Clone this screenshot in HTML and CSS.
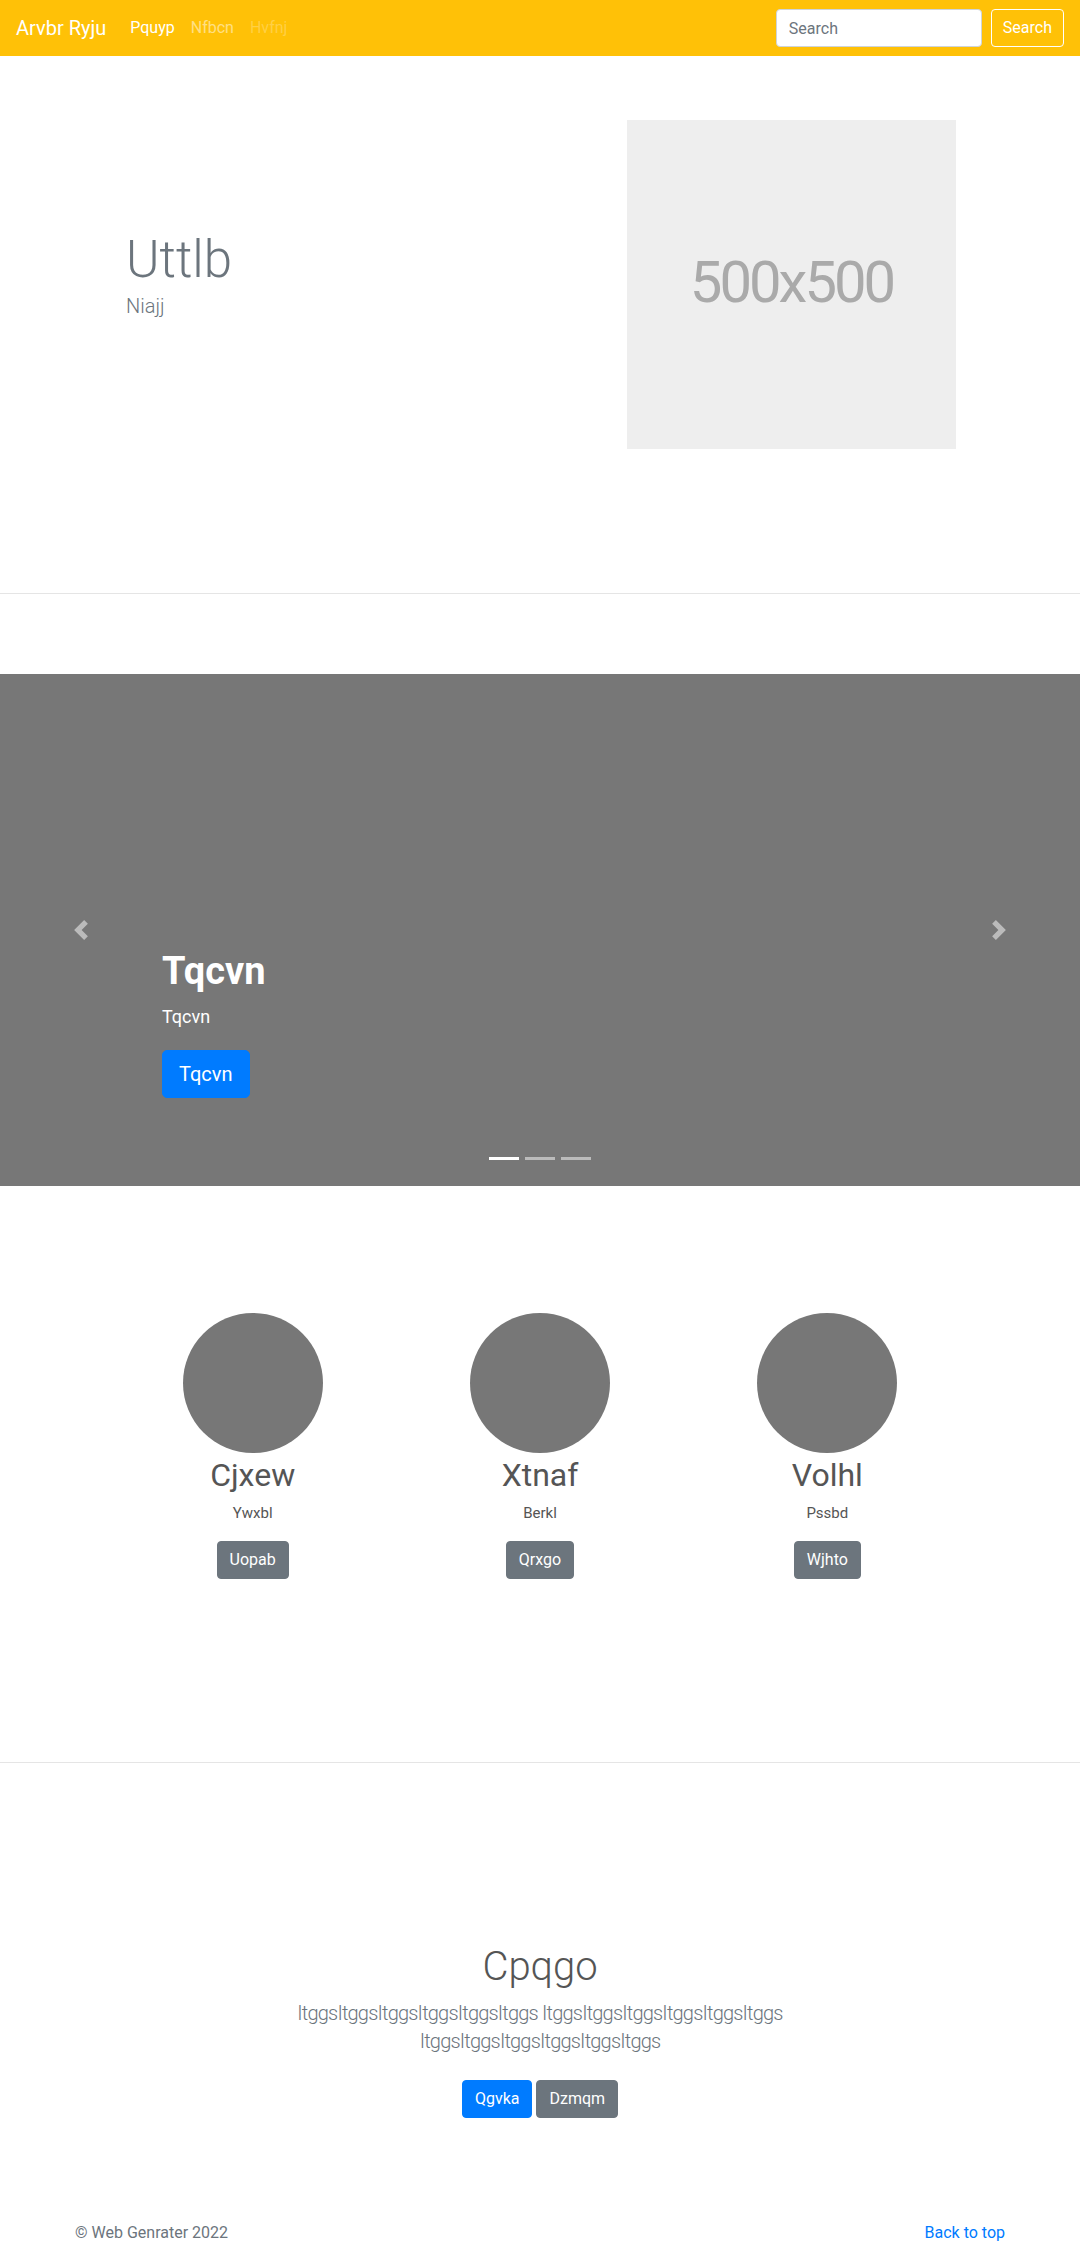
FILE: index.html
```html
<!DOCTYPE html>
<html lang="en">
<head>
<meta charset="utf-8">
<title>Arvbr Ryju</title>
<link rel="stylesheet" href="styles.css">
</head>
<body>
<header class="navbar">
  <a class="brand" href="#">Arvbr Ryju</a>
  <nav class="nav">
    <a class="nav-link active" href="#">Pquyp</a>
    <a class="nav-link" href="#">Nfbcn</a>
    <a class="nav-link disabled" href="#">Hvfnj</a>
  </nav>
  <form class="search">
    <input class="search-input" type="text" placeholder="Search">
    <button class="search-btn" type="button">Search</button>
  </form>
</header>

<section class="hero">
  <div class="hero-text">
    <h1 class="hero-title">Uttlb</h1>
    <p class="hero-lead">Niajj</p>
  </div>
  <div class="hero-img">500x500</div>
</section>

<hr class="divider">

<section class="carousel">
  <div class="caption">
    <h1 class="caption-title">Tqcvn</h1>
    <p class="caption-text">Tqcvn</p>
    <a class="btn btn-primary btn-lg" href="#">Tqcvn</a>
  </div>
  <a class="control control-prev" href="#">
    <svg width="20" height="20" viewBox="0 0 8 8"><path d="M5.25 0l-4 4 4 4 1.5-1.5-2.5-2.5 2.5-2.5-1.5-1.5z"/></svg>
  </a>
  <a class="control control-next" href="#">
    <svg width="20" height="20" viewBox="0 0 8 8"><path d="M2.75 0l-1.5 1.5 2.5 2.5-2.5 2.5 1.5 1.5 4-4-4-4z"/></svg>
  </a>
  <ol class="indicators">
    <li class="active"></li>
    <li></li>
    <li></li>
  </ol>
</section>

<section class="features">
  <div class="feature">
    <div class="circle"></div>
    <h2 class="feature-name">Cjxew</h2>
    <p class="feature-text">Ywxbl</p>
    <a class="btn btn-secondary" href="#">Uopab</a>
  </div>
  <div class="feature">
    <div class="circle"></div>
    <h2 class="feature-name">Xtnaf</h2>
    <p class="feature-text">Berkl</p>
    <a class="btn btn-secondary" href="#">Qrxgo</a>
  </div>
  <div class="feature">
    <div class="circle"></div>
    <h2 class="feature-name">Volhl</h2>
    <p class="feature-text">Pssbd</p>
    <a class="btn btn-secondary" href="#">Wjhto</a>
  </div>
</section>

<hr class="divider">

<section class="album">
  <h1 class="album-title">Cpqgo</h1>
  <p class="album-lead">ItggsItggsItggsItggsItggsItggs ItggsItggsItggsItggsItggsItggs ItggsItggsItggsItggsItggsItggs</p>
  <div class="album-actions">
    <a class="btn btn-primary" href="#">Qgvka</a>
    <a class="btn btn-secondary" href="#">Dzmqm</a>
  </div>
</section>

<footer class="footer">
  <p class="copy">© Web Genrater 2022</p>
  <a class="back" href="#">Back to top</a>
</footer>
</body>
</html>
```

FILE: styles.css
```css
* { box-sizing: border-box; }

body {
  margin: 0;
  font-family: Roboto, "Liberation Sans", sans-serif;
  font-size: 16px;
  line-height: 1.5;
  color: #212529;
  background: #fff;
}

a { text-decoration: none; }

/* Navbar */
.navbar {
  display: flex;
  align-items: center;
  height: 56px;
  padding: 8px 16px;
  background: #ffc107;
}
.brand {
  font-size: 20px;
  line-height: 30px;
  padding: 5px 0;
  margin-right: 16px;
  color: #fff;
}
.nav {
  display: flex;
  flex: 1;
}
.nav-link {
  padding: 8px;
  line-height: 24px;
  color: rgba(255, 255, 255, 0.5);
}
.nav-link.active { color: #fff; }
.nav-link.disabled { color: rgba(255, 255, 255, 0.25); }

.search {
  display: flex;
  align-items: center;
}
.search-input {
  width: 206px;
  height: 38px;
  padding: 6px 12px;
  margin-right: 9px;
  font-family: inherit;
  font-size: 16px;
  color: #495057;
  background: #fff;
  border: 1px solid #ced4da;
  border-radius: 4px;
}
.search-input::placeholder { color: #6c757d; }
.search-btn {
  height: 38px;
  padding: 6px 11px;
  font-family: inherit;
  font-size: 16px;
  line-height: 24px;
  color: #fff;
  background: transparent;
  border: 1px solid #fff;
  border-radius: 4px;
}

/* Hero */
.hero {
  display: flex;
  align-items: flex-start;
  max-width: 960px;
  margin: 0 auto;
  padding: 64px 0 144px;
}
.hero-text {
  flex: 1;
  padding: 109px 0 0 66px;
}
.hero-title {
  margin: 0;
  font-size: 51px;
  font-weight: 300;
  line-height: 1.2;
  color: #6c757d;
}
.hero-lead {
  margin: 1px 0 0;
  font-size: 20px;
  font-weight: 300;
  line-height: 30px;
  color: #6c757d;
}
.hero-img {
  width: 329px;
  height: 329px;
  margin-right: 64px;
  display: flex;
  align-items: center;
  justify-content: center;
  padding-bottom: 5px;
  background: #eee;
  color: #aaa;
  font-size: 58px;
  line-height: 1;
  letter-spacing: -3px;
}

.divider {
  margin: 0;
  border: 0;
  border-top: 1px solid rgba(0, 0, 0, 0.1);
}

/* Carousel */
.carousel {
  position: relative;
  height: 512px;
  margin-top: 80px;
  background: #777;
  display: flex;
  flex-direction: column;
  justify-content: flex-end;
  padding: 0 15% 88px;
}
.caption { color: #fff; }
.caption-title {
  margin: 0 0 8px;
  font-size: 38px;
  font-weight: 700;
  line-height: 1.2;
}
.caption-text {
  margin: 0 0 20px;
  font-size: 18px;
  line-height: 27px;
}
.btn {
  display: inline-block;
  padding: 6px 12px;
  font-size: 16px;
  line-height: 24px;
  color: #fff;
  border: 1px solid transparent;
  border-radius: 4px;
  text-align: center;
}
.btn-lg {
  padding: 8px 16px;
  font-size: 20px;
  line-height: 30px;
  border-radius: 5px;
}
.btn-primary { background: #007bff; border-color: #007bff; }
.btn-secondary { background: #6c757d; border-color: #6c757d; }

.control {
  position: absolute;
  top: 0;
  bottom: 0;
  width: 15%;
  display: flex;
  align-items: center;
  justify-content: center;
}
.control svg { fill: #fff; opacity: 0.5; }
.control-prev { left: 0; }
.control-next { right: 0; }

.indicators {
  position: absolute;
  left: 0;
  right: 0;
  bottom: 26px;
  display: flex;
  justify-content: center;
  margin: 0;
  padding: 0;
  list-style: none;
}
.indicators li {
  width: 30px;
  height: 3px;
  margin: 0 3px;
  background: rgba(255, 255, 255, 0.5);
}
.indicators li.active { background: #fff; }

/* Features */
.features {
  display: grid;
  grid-template-columns: repeat(3, 1fr);
  width: 862px;
  margin: 0 auto;
  padding: 127px 0 183px;
  text-align: center;
}
.feature {
  display: flex;
  flex-direction: column;
  align-items: center;
}
.circle {
  width: 140px;
  height: 140px;
  border-radius: 50%;
  background: #777;
}
.feature-name {
  margin: 3px 0 8px;
  font-size: 32px;
  font-weight: 400;
  line-height: 1.2;
  color: #555;
}
.feature-text {
  margin: 0 0 16px;
  font-size: 15px;
  line-height: 22.5px;
  color: #555;
}

/* Album */
.album {
  max-width: 640px;
  margin: 0 auto;
  padding: 180px 15px 0;
  text-align: center;
}
.album-title {
  margin: 0 0 8px;
  font-size: 40px;
  font-weight: 300;
  line-height: 1.2;
  color: #555;
}
.album-lead {
  margin: 0 0 25px;
  font-size: 20px;
  font-weight: 300;
  line-height: 28px;
  letter-spacing: -0.8px;
  color: #6c757d;
}
.album-actions {
  display: flex;
  justify-content: center;
  gap: 4px;
}

/* Footer */
.footer {
  display: flex;
  justify-content: space-between;
  max-width: 960px;
  margin: 0 auto;
  padding: 103px 15px 0;
  line-height: 24px;
}
.copy { margin: 0; color: #6c757d; }
.back { color: #007bff; }
```
